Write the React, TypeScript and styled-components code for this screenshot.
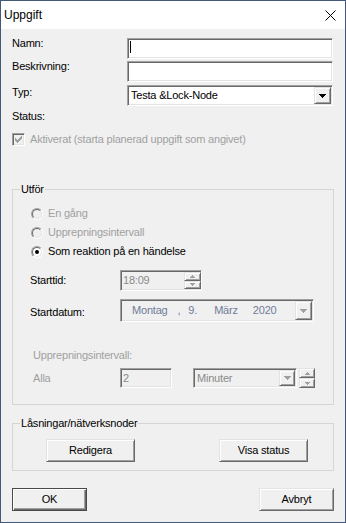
import React from 'react';
import styled, { createGlobalStyle, css } from 'styled-components';

const GlobalStyle = createGlobalStyle`
  html, body { margin: 0; padding: 0; background: #f0f0f0; }
  body {
    font-family: "Microsoft Sans Serif", "Liberation Sans", Arial, sans-serif;
    font-size: 11px;
    line-height: 13px;
    letter-spacing: -0.2px;
    color: #000;
  }
  *, *::before, *::after { box-sizing: border-box; }
`;

const DISABLED = '#a0a0a0';
const FIELD_DISABLED = '#8a8a8a';

const raised = css`
  border: 1px solid;
  border-color: #e3e3e3 #696969 #696969 #e3e3e3;
  box-shadow: inset 1px 1px 0 #ffffff, inset -1px -1px 0 #a0a0a0;
  background: #f0f0f0;
`;

const sunken = css`
  border: 1px solid;
  border-color: #a0a0a0 #ffffff #ffffff #a0a0a0;
  box-shadow: inset 1px 1px 0 #696969, inset -1px -1px 0 #e3e3e3;
`;

const Window = styled.div`
  width: 346px;
  height: 523px;
  border: 1px solid #43597a;
  background: #f0f0f0;
  display: flex;
  flex-direction: column;
`;

const TitleBar = styled.div`
  height: 28px;
  flex: none;
  background: #ffffff;
  display: flex;
  align-items: center;
  justify-content: space-between;
  padding: 0 9px 0 3px;
`;

const Title = styled.span`
  font-family: "Segoe UI", "Liberation Sans", Arial, sans-serif;
  font-size: 12px;
  letter-spacing: 0;
  line-height: 14px;
`;

const Body = styled.div`
  flex: 1;
  display: flex;
  flex-direction: column;
  padding: 9px 11px 0 11px;
`;

const FormRow = styled.div<{ $mt?: number }>`
  display: grid;
  grid-template-columns: 115px 206px;
  align-items: start;
  margin-top: ${(p) => p.$mt ?? 0}px;
`;

const Label = styled.span<{ $dy?: number; $disabled?: boolean; $indent?: number }>`
  display: block;
  margin-top: ${(p) => p.$dy ?? 0}px;
  margin-left: ${(p) => p.$indent ?? 0}px;
  color: ${(p) => (p.$disabled ? DISABLED : '#000')};
  white-space: nowrap;
`;

const EditBox = styled.div<{ $w?: number; $h?: number; $disabled?: boolean }>`
  ${sunken};
  width: ${(p) => (p.$w ? `${p.$w}px` : '100%')};
  height: ${(p) => p.$h ?? 21}px;
  background: ${(p) => (p.$disabled ? '#f0f0f0' : '#ffffff')};
  color: ${(p) => (p.$disabled ? FIELD_DISABLED : '#000')};
  display: flex;
  align-items: center;
  padding: 0 2px;
  flex: none;
`;

const Caret = styled.span`
  align-self: flex-start;
  margin-top: 2px;
  width: 1px;
  height: 12px;
  background: #000;
`;

const ComboBox = styled.div<{ $w?: number; $h?: number; $disabled?: boolean }>`
  ${sunken};
  width: ${(p) => (p.$w ? `${p.$w}px` : '100%')};
  height: ${(p) => p.$h ?? 21}px;
  background: ${(p) => (p.$disabled ? '#f0f0f0' : '#ffffff')};
  color: ${(p) => (p.$disabled ? FIELD_DISABLED : '#000')};
  display: flex;
  align-items: center;
  padding: 1px;
  flex: none;
`;

const ComboText = styled.span`
  flex: 1;
  padding-left: 2px;
  white-space: nowrap;
`;

const DropButton = styled.span<{ $w?: number; $h?: number }>`
  ${raised};
  width: ${(p) => p.$w ?? 17}px;
  height: ${(p) => p.$h ?? 17}px;
  flex: none;
  display: flex;
  align-items: center;
  justify-content: center;
`;

const ArrowSvg = styled.svg`
  display: block;
  shape-rendering: crispEdges;
`;

const DownArrow = ({ color = '#000' }: { color?: string }) => (
  <ArrowSvg width="7" height="4" viewBox="0 0 7 4">
    <path d="M0 0h7v1H0z M1 1h5v1H1z M2 2h3v1H2z M3 3h1v1H3z" fill={color} />
  </ArrowSvg>
);

const SmallArrow = ({ up, color = DISABLED }: { up?: boolean; color?: string }) => (
  <ArrowSvg width="5" height="3" viewBox="0 0 5 3">
    <path
      d={up ? 'M2 0h1v1H2z M1 1h3v1H1z M0 2h5v1H0z' : 'M0 0h5v1H0z M1 1h3v1H1z M2 2h1v1H2z'}
      fill={color}
    />
  </ArrowSvg>
);

const CheckRow = styled.div`
  display: flex;
  align-items: center;
  gap: 5px;
  height: 13px;
  margin-top: 10px;
`;

const CheckBox = styled.span`
  ${sunken};
  width: 13px;
  height: 13px;
  flex: none;
  background: #f0f0f0;
  display: flex;
  align-items: center;
  justify-content: center;
`;

const CheckMark = ({ color }: { color: string }) => (
  <ArrowSvg width="7" height="7" viewBox="0 0 7 7">
    <path
      d="M0 2h1v3H0z M1 3h1v3H1z M2 4h1v3H2z M3 3h1v3H3z M4 2h1v3H4z M5 1h1v3H5z M6 0h1v3H6z"
      fill={color}
    />
  </ArrowSvg>
);

const Group = styled.fieldset<{ $mt: number }>`
  margin: ${(p) => p.$mt}px 0 0 0;
  padding: 0;
  border: 1px solid #d5d5d5;
  min-width: 0;
`;

const Legend = styled.legend`
  margin-left: 7px;
  padding: 0 1px;
  line-height: 13px;
`;

const GroupContent = styled.div<{ $pt: number; $pb: number }>`
  display: flex;
  flex-direction: column;
  padding: ${(p) => p.$pt}px 0 ${(p) => p.$pb}px 17px;
`;

const RadioList = styled.div`
  display: flex;
  flex-direction: column;
  gap: 6px;
  margin-left: 1px;
`;

const RadioRow = styled.div<{ $disabled?: boolean }>`
  display: flex;
  align-items: center;
  gap: 5px;
  height: 13px;
  color: ${(p) => (p.$disabled ? DISABLED : '#000')};
`;

const RadioOuter = styled.span`
  width: 12px;
  height: 12px;
  flex: none;
  border-radius: 50%;
  border: 1px solid;
  border-color: #a0a0a0 #ffffff #ffffff #a0a0a0;
  display: flex;
`;

const RadioInner = styled.span<{ $disabled?: boolean }>`
  flex: 1;
  border-radius: 50%;
  border: 1px solid;
  border-color: #696969 #e3e3e3 #e3e3e3 #696969;
  background: ${(p) => (p.$disabled ? '#f0f0f0' : '#ffffff')};
  display: flex;
  align-items: center;
  justify-content: center;
`;

const RadioDot = styled.span`
  width: 4px;
  height: 4px;
  border-radius: 50%;
  background: #000;
`;

const FieldRow = styled.div<{ $mt: number }>`
  display: grid;
  grid-template-columns: 90px auto;
  align-items: center;
  justify-content: start;
  margin-top: ${(p) => p.$mt}px;
`;

const FieldLine = styled.div`
  display: flex;
  align-items: center;
`;

const SpinField = styled.div<{ $w: number }>`
  ${sunken};
  width: ${(p) => p.$w}px;
  height: 21px;
  background: #f0f0f0;
  color: ${FIELD_DISABLED};
  display: flex;
  align-items: stretch;
  padding: 1px 0 1px 2px;
`;

const SpinText = styled.span`
  flex: 1;
  display: flex;
  align-items: center;
`;

const UpDown = styled.div<{ $w: number; $h?: number; $ml?: number }>`
  width: ${(p) => p.$w}px;
  ${(p) => (p.$h ? `height: ${p.$h}px;` : '')}
  margin-left: ${(p) => p.$ml ?? 0}px;
  flex: none;
  display: flex;
  flex-direction: column;
`;

const SpinButton = styled.span`
  ${raised};
  flex: 1;
  display: flex;
  align-items: center;
  justify-content: center;
`;

const DateBox = styled.div`
  ${sunken};
  width: 194px;
  height: 23px;
  background: #f0f0f0;
  color: #6f7c98;
  display: flex;
  align-items: center;
  padding: 0 1px 0 11px;
`;

const DateSeg = styled.span<{ $ml?: number }>`
  margin-left: ${(p) => p.$ml ?? 0}px;
  white-space: nowrap;
`;

const Spacer = styled.span`
  flex: 1;
`;

const Gap = styled.span<{ $w: number }>`
  width: ${(p) => p.$w}px;
  flex: none;
`;

const ButtonRow = styled.div<{ $pl: number; $pr: number }>`
  display: flex;
  justify-content: space-between;
  padding: 0 ${(p) => p.$pr}px 0 ${(p) => p.$pl}px;
`;

const PushButton = styled.button<{ $w: number; $default?: boolean }>`
  ${raised};
  width: ${(p) => p.$w}px;
  height: 23px;
  padding: 0;
  margin: 0;
  font: inherit;
  letter-spacing: inherit;
  color: #000;
  ${(p) =>
    p.$default &&
    css`
      border-color: #4a4a4a;
      box-shadow: inset 1px 1px 0 #ffffff, inset -1px -1px 0 #696969, inset -2px -2px 0 #a0a0a0;
    `}
`;

const Footer = styled(ButtonRow)`
  margin-top: 17px;
`;

export default function App() {
  return (
    <>
      <GlobalStyle />
      <Window>
        <TitleBar>
          <Title>Uppgift</Title>
          <svg width="11" height="11" viewBox="0 0 11 11">
            <path d="M0.5 0.5L10.5 10.5M10.5 0.5L0.5 10.5" stroke="#000" strokeWidth="1" />
          </svg>
        </TitleBar>
        <Body>
          <FormRow>
            <Label $dy={-1}>Namn:</Label>
            <EditBox>
              <Caret />
            </EditBox>
          </FormRow>
          <FormRow $mt={2}>
            <Label $dy={-1}>Beskrivning:</Label>
            <EditBox />
          </FormRow>
          <FormRow $mt={3}>
            <Label $dy={1}>Typ:</Label>
            <ComboBox>
              <ComboText>Testa &amp;Lock-Node</ComboText>
              <DropButton>
                <DownArrow />
              </DropButton>
            </ComboBox>
          </FormRow>
          <Label style={{ marginTop: 4 }}>Status:</Label>
          <CheckRow>
            <CheckBox>
              <CheckMark color={DISABLED} />
            </CheckBox>
            <Label $disabled>Aktiverat (starta planerad uppgift som angivet)</Label>
          </CheckRow>

          <Group $mt={37}>
            <Legend>Utför</Legend>
            <GroupContent $pt={11} $pb={16}>
              <RadioList>
                <RadioRow $disabled>
                  <RadioOuter>
                    <RadioInner $disabled />
                  </RadioOuter>
                  En gång
                </RadioRow>
                <RadioRow $disabled>
                  <RadioOuter>
                    <RadioInner $disabled />
                  </RadioOuter>
                  Upprepningsintervall
                </RadioRow>
                <RadioRow>
                  <RadioOuter>
                    <RadioInner>
                      <RadioDot />
                    </RadioInner>
                  </RadioOuter>
                  Som reaktion på en händelse
                </RadioRow>
              </RadioList>

              <FieldRow $mt={12}>
                <Label>Starttid:</Label>
                <SpinField $w={82}>
                  <SpinText>18:09</SpinText>
                  <UpDown $w={17}>
                    <SpinButton>
                      <SmallArrow up />
                    </SpinButton>
                    <SpinButton>
                      <SmallArrow />
                    </SpinButton>
                  </UpDown>
                </SpinField>
              </FieldRow>

              <FieldRow $mt={8}>
                <Label $dy={3}>Startdatum:</Label>
                <DateBox>
                  <DateSeg>Montag</DateSeg>
                  <DateSeg $ml={10}>,</DateSeg>
                  <DateSeg $ml={8}>9.</DateSeg>
                  <DateSeg $ml={17}>März</DateSeg>
                  <DateSeg $ml={15}>2020</DateSeg>
                  <Spacer />
                  <DropButton $w={17} $h={19}>
                    <DownArrow color={DISABLED} />
                  </DropButton>
                </DateBox>
              </FieldRow>

              <Label $disabled $indent={3} style={{ marginTop: 27 }}>
                Upprepningsintervall:
              </Label>

              <FieldRow $mt={6}>
                <Label $disabled $indent={3}>
                  Alla
                </Label>
                <FieldLine>
                  <EditBox $w={52} $h={20} $disabled>
                    2
                  </EditBox>
                  <Gap $w={21} />
                  <ComboBox $w={104} $h={20} $disabled>
                    <ComboText>Minuter</ComboText>
                    <DropButton $w={16} $h={16}>
                      <DownArrow color={DISABLED} />
                    </DropButton>
                  </ComboBox>
                  <UpDown $w={16} $h={20} $ml={2}>
                    <SpinButton>
                      <SmallArrow up />
                    </SpinButton>
                    <SpinButton>
                      <SmallArrow />
                    </SpinButton>
                  </UpDown>
                </FieldLine>
              </FieldRow>
            </GroupContent>
          </Group>

          <Group $mt={12}>
            <Legend>Låsningar/nätverksnoder</Legend>
            <GroupContent $pt={9} $pb={8}>
              <ButtonRow $pl={16} $pr={25}>
                <PushButton $w={89}>Redigera</PushButton>
                <PushButton $w={89}>Visa status</PushButton>
              </ButtonRow>
            </GroupContent>
          </Group>

          <Footer $pl={0} $pr={0}>
            <PushButton $w={75} $default>
              OK
            </PushButton>
            <PushButton $w={75}>Avbryt</PushButton>
          </Footer>
        </Body>
      </Window>
    </>
  );
}
